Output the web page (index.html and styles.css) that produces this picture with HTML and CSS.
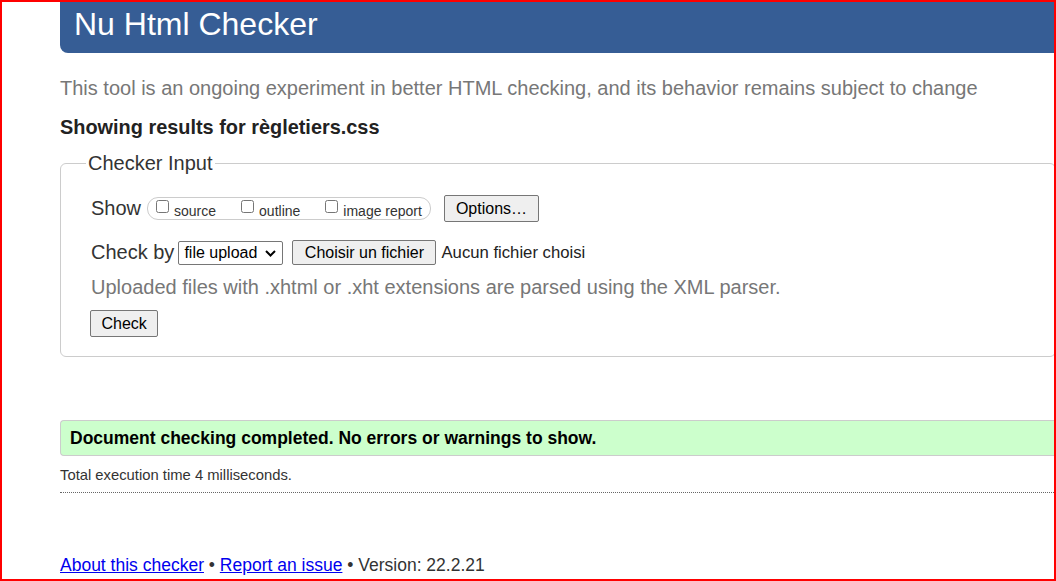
FILE: index.html
```html
<!DOCTYPE html>
<html lang="en">
<head>
<meta charset="utf-8">
<title>Nu Html Checker</title>
<link rel="stylesheet" href="styles.css">
</head>
<body>
<div class="page">
  <h1 class="title">Nu Html Checker</h1>
  <p class="description">This tool is an ongoing experiment in better HTML checking, and its behavior remains subject to change</p>
  <p class="showing">Showing results for règletiers.css</p>
  <fieldset class="input">
    <legend class="legend">Checker Input</legend>
    <div class="inner">
      <div class="row row-show">
        <span class="lbl">Show</span>
        <span class="group">
          <label class="opt"><input type="checkbox" class="cb"><span>source</span></label>
          <label class="opt"><input type="checkbox" class="cb"><span>outline</span></label>
          <label class="opt last"><input type="checkbox" class="cb"><span>image report</span></label>
        </span>
        <button class="btn btn-options" type="button">Options…</button>
      </div>
      <div class="row row-checkby">
        <span class="lbl">Check by</span>
        <span class="select">file upload
          <svg class="chev" width="11" height="7" viewBox="0 0 11 7"><path d="M1 1 L5.5 5.5 L10 1" fill="none" stroke="#000" stroke-width="2"/></svg>
        </span>
        <button class="btn btn-file" type="button">Choisir un fichier</button>
        <span class="nofile">Aucun fichier choisi</span>
      </div>
      <p class="note">Uploaded files with .xhtml or .xht extensions are parsed using the XML parser.</p>
      <div class="row row-submit">
        <button class="btn btn-check" type="button">Check</button>
      </div>
    </div>
  </fieldset>
  <p class="success">Document checking completed. No errors or warnings to show.</p>
  <p class="stats">Total execution time 4 milliseconds.</p>
  <p class="footer"><a href="#">About this checker</a> • <a href="#">Report an issue</a> • Version: 22.2.21</p>
</div>
<div class="frame"></div>
</body>
</html>
```

FILE: styles.css
```css
html, body {
  margin: 0;
  padding: 0;
  background: #fff;
  overflow: hidden;
}
body {
  font-family: "Liberation Sans", Arial, sans-serif;
  color: #222;
}
.page {
  margin-left: 60px;
  display: flex;
  flex-direction: column;
}
.title {
  margin: 0;
  height: 53px;
  box-sizing: border-box;
  padding: 6px 0 0 14px;
  font-size: 32px;
  line-height: 37px;
  font-weight: normal;
  color: #fff;
  background: #365d95;
  border-bottom-left-radius: 8px;
}
.description {
  margin: 24px 0 0;
  font-size: 20px;
  line-height: 23px;
  color: #777;
}
.showing {
  margin: 16px 0 0;
  font-size: 19.9px;
  line-height: 23px;
  font-weight: bold;
  color: #222;
}
.input {
  margin: 13px 0 0;
  padding: 0 25px 19px 25px;
  border: 1px solid #ccc;
  border-radius: 6px;
  min-inline-size: 0;
}
.legend {
  padding: 0 2px;
  font-size: 20px;
  line-height: 23px;
  color: #333;
}
.inner {
  padding-left: 5px;
  display: flex;
  flex-direction: column;
}
.row {
  display: flex;
  align-items: center;
}
.row-show {
  margin-top: 20px;
  height: 27px;
}
.row-checkby {
  margin-top: 18px;
  height: 25px;
}
.row-submit {
  margin-top: 11px;
}
.lbl {
  font-size: 20px;
  line-height: 23px;
  color: #333;
}
.row-show .lbl {
  margin-right: 6px;
}
.row-checkby .lbl {
  margin-right: 4px;
}
.group {
  display: flex;
  align-items: center;
  height: 21px;
  padding: 0 8px 0 4px;
  border: 1px solid #ccc;
  border-radius: 11px;
}
.opt {
  display: flex;
  align-items: center;
  font-size: 14px;
  line-height: 16px;
  color: #333;
  margin-right: 21px;
}
.opt.last {
  margin-right: 0;
}
.opt span {
  margin-top: 4px;
}
.cb {
  width: 13px;
  height: 13px;
  margin: 0 5px 0 4px;
  position: relative;
  top: -2px;
}
.btn {
  font-family: "Liberation Sans", Arial, sans-serif;
  font-size: 16px;
  line-height: 18px;
  color: #000;
  background: #efefef;
  border: 1px solid #767676;
  border-radius: 2px;
  box-sizing: border-box;
}
.btn-options {
  margin-left: 13px;
  height: 27px;
  padding: 0 11px;
}
.select {
  display: inline-flex;
  align-items: center;
  gap: 8px;
  height: 24px;
  box-sizing: border-box;
  padding: 0 6px 0 5px;
  border: 1px solid #767676;
  border-radius: 2px;
  font-size: 16px;
  color: #000;
  background: #fff;
}
.chev {
  display: block;
  margin-top: 1px;
}
.btn-file {
  margin-left: 9px;
  height: 25px;
  padding: 0 11.5px;
}
.nofile {
  margin-left: 5px;
  font-size: 16.7px;
  color: #222;
}
.note {
  margin: 11px 0 0;
  font-size: 20px;
  line-height: 23px;
  color: #777;
}
.btn-check {
  height: 27px;
  padding: 0 10.5px;
  margin-left: -1px;
}
.success {
  margin: 63px 0 0;
  height: 36px;
  box-sizing: border-box;
  padding: 0 9px;
  display: flex;
  align-items: center;
  font-size: 17.5px;
  font-weight: bold;
  color: #000;
  background: #ccffcc;
  border: 1px solid #ccc;
  border-right: none;
  border-radius: 4px 0 0 4px;
}
.stats {
  margin: 11px 0 0;
  padding-bottom: 8px;
  font-size: 14.8px;
  line-height: 17px;
  color: #333;
  border-bottom: 1px dotted #666;
}
.footer {
  margin: 62px 0 0;
  font-size: 17.5px;
  line-height: 21px;
  color: #333;
}
.footer a {
  color: #0000ee;
}
.frame {
  position: fixed;
  inset: 0;
  border: 2px solid #ff0000;
  pointer-events: none;
}
```
